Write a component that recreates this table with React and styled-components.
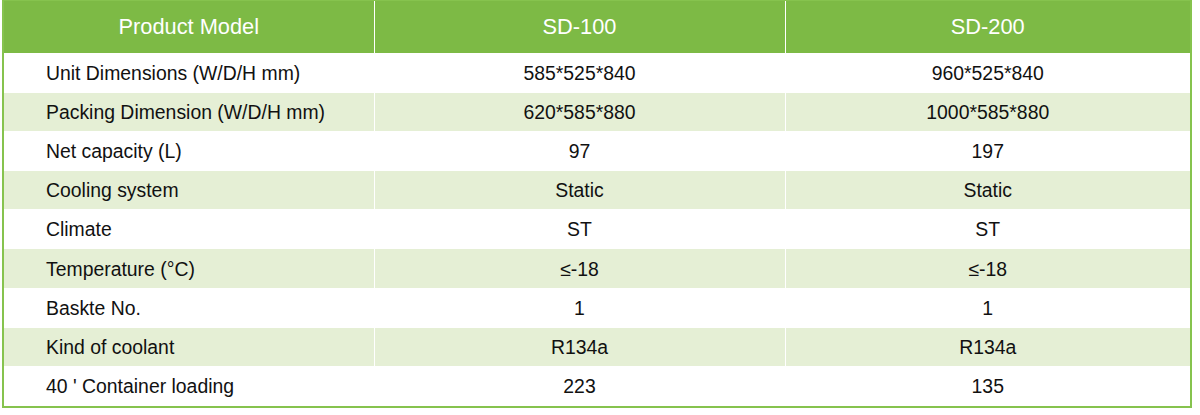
import React from 'react';
import styled, { createGlobalStyle } from 'styled-components';

const specs = [
  ['Unit Dimensions (W/D/H mm)', '585*525*840', '960*525*840'],
  ['Packing Dimension (W/D/H mm)', '620*585*880', '1000*585*880'],
  ['Net capacity (L)', '97', '197'],
  ['Cooling system', 'Static', 'Static'],
  ['Climate', 'ST', 'ST'],
  ['Temperature (°C)', '≤-18', '≤-18'],
  ['Baskte No.', '1', '1'],
  ['Kind of coolant', 'R134a', 'R134a'],
  ["40 ' Container loading", '223', '135'],
];

export default function App() {
  return (
    <>
      <GlobalStyle />
      <Frame>
        <Table>
          <colgroup>
            <col style={{ width: 370 }} />
            <col style={{ width: 411 }} />
            <col />
          </colgroup>
          <thead>
            <HeadRow>
              <HeadCell>Product Model</HeadCell>
              <HeadCell>SD-100</HeadCell>
              <HeadCell>SD-200</HeadCell>
            </HeadRow>
          </thead>
          <tbody>
            {specs.map((row, i) => (
              <Row key={row[0]} shaded={i % 2 === 1}>
                <LabelCell>{row[0]}</LabelCell>
                <ValueCell>{row[1]}</ValueCell>
                <ValueCell>{row[2]}</ValueCell>
              </Row>
            ))}
          </tbody>
        </Table>
      </Frame>
    </>
  );
}

const GlobalStyle = createGlobalStyle`
  body {
    margin: 0;
    background: #fff;
    font-family: "Liberation Sans", Arial, sans-serif;
  }
`;

const Frame = styled.div`
  width: 1186px;
  margin-left: 2px;
  border: 2px solid #86c34e;
  border-top-width: 1px;
`;

const Table = styled.table`
  width: 100%;
  border-collapse: collapse;
  table-layout: fixed;
`;

const HeadRow = styled.tr`
  height: 52px;
  background: #7dba45;
`;

const HeadCell = styled.th`
  padding: 0;
  color: #fff;
  font-size: 21.8px;
  font-weight: 400;
  text-align: center;
  border-right: 1px solid #fff;
  border-bottom: 1px solid #fff;

  &:last-child {
    border-right: none;
  }
`;

const Row = styled.tr`
  height: 39.2px;
  background: ${props => (props.shaded ? '#e5efd5' : '#fff')};
`;

const LabelCell = styled.td`
  padding: 1px 0 0 42px;
  color: #111;
  font-size: 19.4px;
  border-right: 1px solid #fff;
  border-bottom: 1px solid #fff;
`;

const ValueCell = styled.td`
  padding: 1px 0 0;
  color: #111;
  font-size: 19.4px;
  text-align: center;
  border-right: 1px solid #fff;
  border-bottom: 1px solid #fff;

  &:last-child {
    border-right: none;
  }
`;
